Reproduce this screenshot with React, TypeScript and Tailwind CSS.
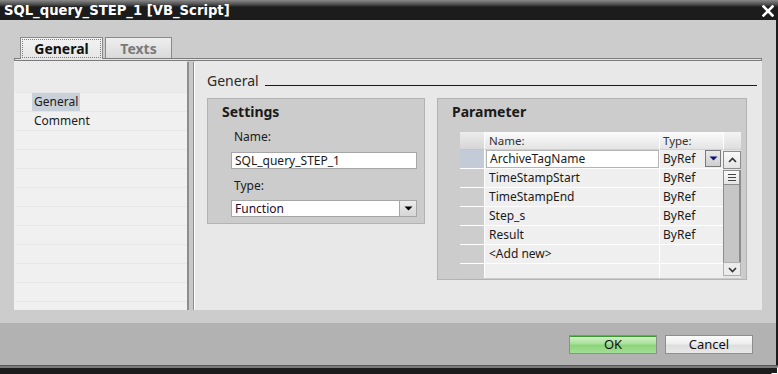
import React from "react";

const rows = [
  { name: "ArchiveTagName", type: "ByRef" },
  { name: "TimeStampStart", type: "ByRef" },
  { name: "TimeStampEnd", type: "ByRef" },
  { name: "Step_s", type: "ByRef" },
  { name: "Result", type: "ByRef" },
  { name: "<Add new>", type: "" },
];

function Tri({ color = "#000" }: { color?: string }) {
  return (
    <svg width="9" height="5" viewBox="0 0 9 5">
      <path d="M0.5 0.5 L8.5 0.5 L4.5 4.5 Z" fill={color} />
    </svg>
  );
}

export default function App() {
  const navLines = Array.from({ length: 11 });
  return (
    <div className="w-[778px] h-[374px] overflow-hidden flex flex-col bg-[#1c1c1c] font-['Noto_Sans',sans-serif] text-[#1a1a1a] relative">
      {/* Title bar */}
      <div className="h-[20px] flex items-start justify-between bg-[linear-gradient(to_bottom,#8a8a8a_0px,#454545_5px,#1c1c1c_7px,#1c1c1c_100%)]">
        <div className="pl-[4px] pt-[2px] text-white font-bold text-[13.2px] leading-[18px] font-['DejaVu_Sans',sans-serif]">
          SQL_query_STEP_1 [VB_Script]
        </div>
        <svg width="12" height="12" viewBox="0 0 12 12" className="mt-[5px] mr-[4px]">
          <path d="M1.5 1.5 L10.5 10.5 M10.5 1.5 L1.5 10.5" stroke="#fff" strokeWidth="2.6" strokeLinecap="square" />
        </svg>
      </div>

      <div className="flex h-[345px]">
        <div className="flex-1 flex flex-col">
          {/* Body */}
          <div className="h-[303px] bg-[#cccccc] pt-[17px] pl-[14px] pr-[14px] pb-[13px] flex flex-col">
            {/* Tabs */}
            <div className="flex pl-[6px] gap-[2px] h-[21px] relative z-10">
              <div className="w-[83px] h-[22px] border border-b-0 border-[#8a8a8a] bg-[linear-gradient(to_bottom,#f2f2f2,#e6e6e6)] p-[1px]">
                <div className="h-full border border-dotted border-[#6b7fa8] flex items-center justify-center text-[14px] font-bold text-[#111]">
                  General
                </div>
              </div>
              <div className="w-[67px] h-[21px] border border-b-0 border-[#8a8a8a] bg-[linear-gradient(to_bottom,#eeeeee,#dadada)] flex items-center justify-center text-[14px] font-bold text-[#7a7a7a]">
                Texts
              </div>
            </div>
            {/* Panel */}
            <div className="flex-1 flex flex-col">
              <div className="h-[3px] border border-[#7c7c7c] bg-[#e4e4e4]" />
              <div className="flex-1 flex">
                {/* Nav */}
                <div className="w-[173px] flex flex-col bg-[#f0f0f0]">
                  <div className="h-[31px] bg-[#ebebeb]" />
                  {navLines.map((_, i) => (
                    <div key={i} className="h-[19px] border-t border-[#e6e6e6] ml-[2px] flex items-center">
                      {i === 0 && (
                        <span className="ml-[16px] px-[2px] bg-[#c8d0da] text-[12px] leading-[18px]">General</span>
                      )}
                      {i === 1 && <span className="ml-[18px] text-[12px] leading-[18px]">Comment</span>}
                    </div>
                  ))}
                  <div className="flex-1 border-t border-[#e6e6e6] ml-[2px]" />
                </div>
                {/* Splitter */}
                <div className="w-[8px] flex pt-[1px]">
                  <div className="w-[2px] bg-[#8e8e8e]" />
                  <div className="w-[4px] bg-[#c8c8c8]" />
                  <div className="w-[1px] bg-[#8e8e8e]" />
                  <div className="w-[1px] bg-[#ffffff]" />
                </div>
                {/* Content */}
                <div className="flex-1 bg-[#e8e8e8] flex flex-col pl-[12px] pt-[10px]">
                  <div className="flex items-end h-[19px] pr-[5px]">
                    <span className="text-[14px] leading-[19px] text-[#2a2a2a]">General</span>
                    <div className="flex-1 h-[1px] bg-[#1a1a1a] ml-[6px] mb-[4px]" />
                  </div>
                  <div className="flex items-start gap-[12px] mt-[8px]">
                    {/* Settings */}
                    <div className="w-[218px] h-[126px] border border-[#b3b3b3] bg-[#cccccc] flex flex-col pl-[14px] pt-[3px]">
                      <div className="text-[14px] font-bold leading-[20px] text-[#1a1a1a]">Settings</div>
                      <div className="text-[12px] leading-[16px] mt-[7px] pl-[12px] text-[#1a1a1a]">Name:</div>
                      <div className="mt-[7px] ml-[9px] w-[186px] h-[17px] bg-white border border-[#a6a6a6] text-[12px] leading-[15px] pl-[3px]">
                        SQL_query_STEP_1
                      </div>
                      <div className="text-[12px] leading-[16px] mt-[9px] pl-[12px] text-[#1a1a1a]">Type:</div>
                      <div className="mt-[6px] ml-[9px] w-[186px] h-[17px] bg-white border border-[#a6a6a6] flex">
                        <div className="flex-1 text-[12px] leading-[15px] pl-[3px] text-[#2a0a2a]">Function</div>
                        <div className="w-[17px] border-l border-[#a6a6a6] bg-[linear-gradient(to_bottom,#ececec,#d6d6d6)] flex items-center justify-center">
                          <Tri />
                        </div>
                      </div>
                    </div>
                    {/* Parameter */}
                    <div className="w-[310px] h-[182px] border border-[#b3b3b3] bg-[#cccccc] flex flex-col pt-[3px]">
                      <div className="text-[14px] font-bold leading-[20px] pl-[14px] text-[#1a1a1a]">Parameter</div>
                      <div className="ml-[22px] mt-[10px] w-[281px] h-[146px] flex flex-col">
                        {/* header */}
                        <div className="flex h-[18px] text-[11.5px] leading-[17px] text-[#333]">
                          <div className="w-[24px] bg-[linear-gradient(to_bottom,#ececec,#d6d6d6)] border-b border-[#c4c4c4]" />
                          <div className="w-[175px] bg-[linear-gradient(to_bottom,#fbfbfb,#e4e4e4)] border-l border-white border-b border-b-[#d0d0d0] pl-[4px]">Name:</div>
                          <div className="w-[64px] bg-[linear-gradient(to_bottom,#fbfbfb,#e4e4e4)] border-l border-white border-b border-b-[#d0d0d0] pl-[3px]">Type:</div>
                          <div className="w-[18px] bg-[linear-gradient(to_bottom,#f4f4f4,#dedede)] border-l border-white border-b border-b-[#d0d0d0]" />
                        </div>
                        <div className="flex flex-1">
                          <div className="w-[263px] flex flex-col">
                            {rows.map((r, i) => (
                              <div key={i} className="flex h-[19px] text-[12px] leading-[18px]">
                                <div className={`w-[24px] border-b border-white ${i === 0 ? "bg-[#c3ccd6]" : "bg-[#cdcdcd]"}`} />
                                <div className="w-[175px] bg-[#efefef] border-l border-white border-b border-white flex">
                                  {i === 0 ? (
                                    <div className="flex-1 ml-[1px] bg-white border border-[#b4b4b4] leading-[16px] pl-[3px]">{r.name}</div>
                                  ) : (
                                    <div className="pl-[4px]">{r.name}</div>
                                  )}
                                </div>
                                <div className="w-[64px] bg-[#efefef] border-l border-white border-b border-white flex items-start pl-[3px]">
                                  <span className="flex-1">{r.type}</span>
                                  {i === 0 && (
                                    <div className="w-[16px] h-[17px] mr-[2px] border border-[#7a7a7a] bg-[linear-gradient(to_bottom,#e8e8e8,#cfcfcf)] flex items-center justify-center">
                                      <Tri color="#10107a" />
                                    </div>
                                  )}
                                </div>
                              </div>
                            ))}
                            <div className="flex flex-1">
                              <div className="w-[24px] bg-[#cdcdcd]" />
                              <div className="w-[175px] bg-[#efefef] border-l border-white" />
                              <div className="w-[64px] bg-[#efefef] border-l border-white" />
                            </div>
                          </div>
                          {/* scrollbar */}
                          <div className="w-[18px] flex flex-col bg-[#e6e6e6] pt-[1px] pb-[2px]">
                            <div className="h-[18px] border border-[#8c8c8c] bg-[linear-gradient(to_bottom,#fafafa,#e4e4e4)] flex items-center justify-center">
                              <svg width="9" height="6" viewBox="0 0 9 6">
                                <path d="M1 5 L4.5 1.5 L8 5" stroke="#333" strokeWidth="1.6" fill="none" />
                              </svg>
                            </div>
                            <div className="h-[92px] mt-[1px] border-r-2 border-l border-[#8c8c8c] bg-[#c6c6c6] flex flex-col">
                              <div className="h-[15px] border-y border-[#8c8c8c] bg-[linear-gradient(to_bottom,#fafafa,#e4e4e4)] flex flex-col items-center justify-center gap-[2px]">
                                <div className="w-[8px] h-[1px] bg-[#444]" />
                                <div className="w-[8px] h-[1px] bg-[#444]" />
                                <div className="w-[8px] h-[1px] bg-[#444]" />
                              </div>
                            </div>
                            <div className="flex-1 border border-[#b0b0b0] bg-[#ececec] flex items-end justify-center pb-[2px]">
                              <svg width="9" height="6" viewBox="0 0 9 6">
                                <path d="M1 1 L4.5 4.5 L8 1" stroke="#333" strokeWidth="1.6" fill="none" />
                              </svg>
                            </div>
                          </div>
                        </div>
                      </div>
                    </div>
                  </div>
                </div>
              </div>
            </div>
          </div>
          {/* Footer */}
          <div className="flex-1 bg-[#b2b2b2] flex justify-end items-start pt-[12px] pr-[23px] gap-[8px]">
            <div className="w-[88px] h-[19px] border border-[#8e8e8e] bg-[linear-gradient(to_bottom,#d6f2cf_0%,#a7e19a_45%,#8cd47c_55%,#a3de96_100%)] flex items-center justify-center text-[13px] leading-[17px] text-[#111] shadow-[inset_0_1px_0_#3c9a30]">
              OK
            </div>
            <div className="w-[88px] h-[19px] border border-[#8e8e8e] bg-[linear-gradient(to_bottom,#fbfbfb_0%,#eeeeee_45%,#dedede_55%,#e8e8e8_100%)] flex items-center justify-center text-[13px] leading-[17px] text-[#111]">
              Cancel
            </div>
          </div>
        </div>
        <div className="w-[2px] bg-[#1c1c1c]" />
      </div>

      {/* Bottom border */}
      <div className="h-[9px] flex flex-col">
        <div className="h-[1px] bg-[#555555]" />
        <div className="h-[2px] bg-[#7a7a7a]" />
        <div className="flex-1 bg-[#1c1c1c]" />
      </div>
      <svg width="7" height="7" viewBox="0 0 7 7" className="absolute right-0 bottom-0">
        <path d="M0.5 6.5 L6.5 6.5 L6.5 0.5" stroke="#fff" strokeWidth="1" fill="none" />
      </svg>
    </div>
  );
}
